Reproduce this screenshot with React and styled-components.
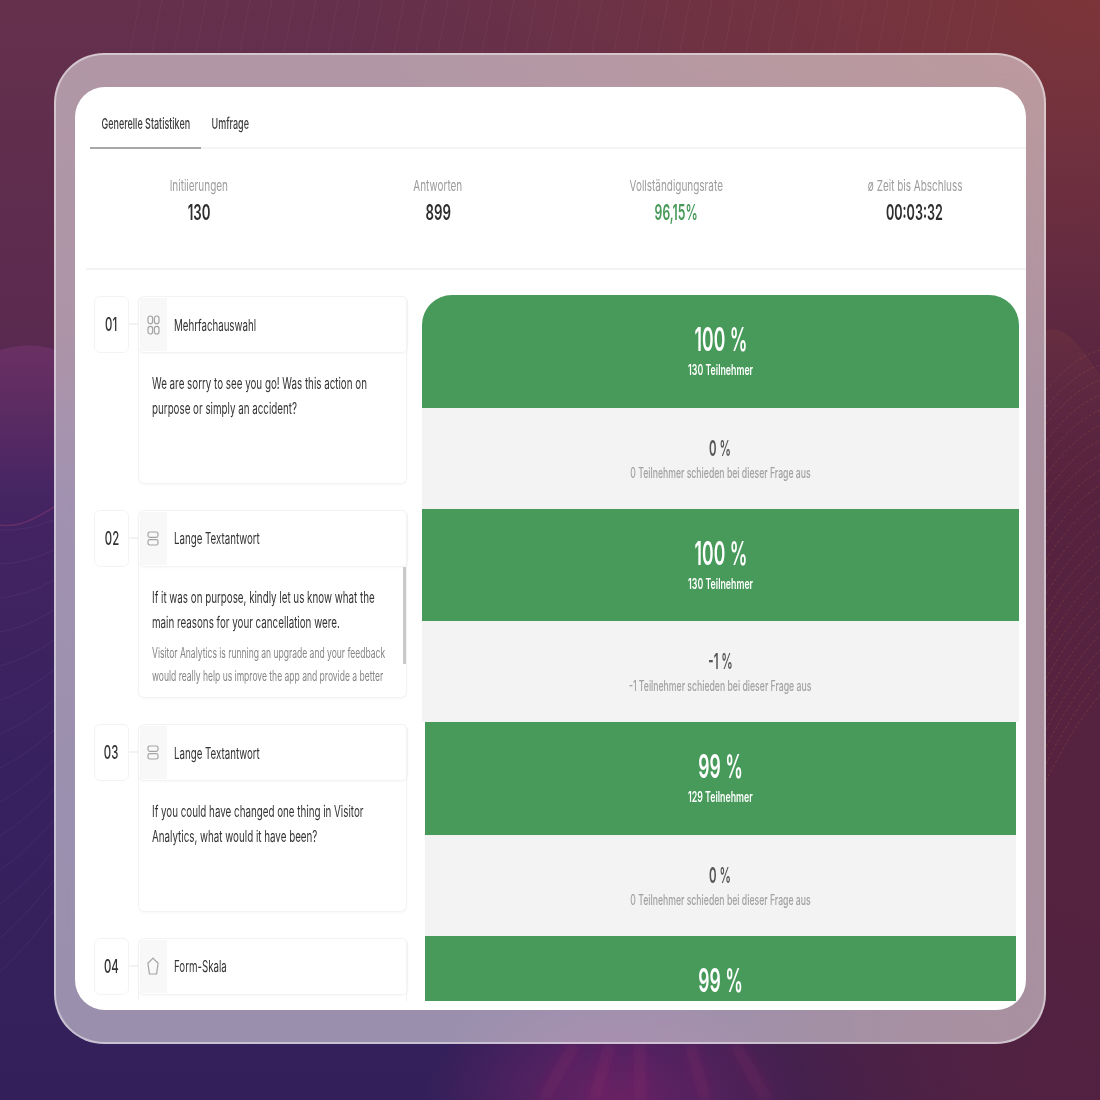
import React from 'react'
import styled, { createGlobalStyle } from 'styled-components'

const GlobalStyle = createGlobalStyle`
  html, body {
    margin: 0;
    padding: 0;
    background: #3a2058;
    font-family: Inter, "Noto Sans", "Liberation Sans", sans-serif;
  }
`;

const Page = styled.div`
  position: relative;
  box-sizing: border-box;
  width: 1100px;
  height: 1100px;
  padding: 53px 54px 56px;
  overflow: hidden;
  background:
    radial-gradient(ellipse 190px 130px at 56% 100%, rgba(135, 35, 105, .65), transparent 100%),
    radial-gradient(ellipse 760px 420px at 100% 0%, #7c3539 0%, transparent 100%),
    radial-gradient(ellipse 520px 760px at 100% 62%, #55223f 30%, transparent 100%),
    radial-gradient(ellipse 420px 260px at 100% 100%, #4c2046 20%, transparent 100%),
    linear-gradient(180deg, #64304c 0%, #5b2a4f 30%, #452462 44%, #38215f 70%, #33205a 100%);
`;

const Terrain = styled.svg`
  position: absolute;
  top: 0;
  left: 0;
  width: 1100px;
  height: 1100px;
`;

const Frame = styled.div`
  position: relative;
  box-sizing: border-box;
  width: 992px;
  height: 991px;
  padding: 32px 18px 32px 19px;
  background: rgba(255, 255, 255, .5);
  border: 2px solid rgba(255, 255, 255, .45);
  border-radius: 50px;
  backdrop-filter: blur(14px);
`;

const Sheet = styled.div`
  display: flex;
  flex-direction: column;
  height: 100%;
  background: #fff;
  border-radius: 30px;
  overflow: hidden;
  filter: blur(.35px);
`;

const TabBar = styled.div`
  display: flex;
  flex: none;
  box-sizing: border-box;
  height: 62px;
  margin-left: 15px;
  border-bottom: 2px solid #f4f4f4;
`;

const Tab = styled.div`
  display: flex;
  align-items: center;
  justify-content: center;
  box-sizing: border-box;
  width: ${props => props.$width}px;
  height: 62px;
  padding-top: 12px;
  color: #3c3c3c;
  font-size: 15px;
  font-weight: 500;
  border-bottom: 2px solid ${props => props.$active ? '#a8a8a8' : 'transparent'};
`;

const Squeeze = styled.span`
  display: inline-block;
  white-space: nowrap;
  transform: scaleX(${props => props.$sx || 0.63});
  transform-origin: ${props => props.$left ? 'left center' : 'center center'};
`;

const Stats = styled.div`
  box-sizing: border-box;
  flex: none;
  height: 121px;
  margin-left: 11px;
  border-bottom: 2px solid #f3f3f3;
`;

const StatsGrid = styled.div`
  display: grid;
  grid-template-columns: repeat(4, 238.5px);
  margin-left: -6px;
  padding-top: 27px;
`;

const Stat = styled.div`
  display: flex;
  flex-direction: column;
  align-items: center;
  gap: 5px;
`;

const StatLabel = styled.div`
  color: #9c9c9c;
  font-size: 15px;
  line-height: 20px;
`;

const StatValue = styled.div`
  color: ${props => props.$green ? '#479a5a' : '#2e2e2e'};
  font-size: 21px;
  font-weight: 600;
  line-height: 24px;
`;

const List = styled.div`
  flex: none;
  height: 706px;
  margin-top: 25px;
  overflow: hidden;
`;

const Row = styled.div`
  display: grid;
  grid-template-columns: 313px 597px;
  column-gap: 15px;
  height: 213.67px;
  padding-left: 19px;
`;

const Question = styled.div`
  display: flex;
  align-items: flex-start;
  padding-top: ${props => props.$top}px;
`;

const NumBox = styled.div`
  display: flex;
  flex: none;
  align-items: center;
  justify-content: center;
  box-sizing: border-box;
  width: 35px;
  height: 57px;
  color: #333;
  font-size: 19px;
  font-weight: 500;
  border: 1.5px solid #f3f3f3;
  border-radius: 6px;
`;

const Connector = styled.div`
  flex: none;
  width: 9px;
  height: 2px;
  margin-top: 27px;
  background: #f2f2f2;
`;

const Card = styled.div`
  display: flex;
  flex: none;
  flex-direction: column;
  box-sizing: border-box;
  width: 269px;
  height: 188px;
  border: 1.5px solid #f3f3f3;
  border-top: none;
  border-radius: 6px;
  box-shadow: 0 1px 2px rgba(0, 0, 0, .03);
`;

const CardHead = styled.div`
  display: flex;
  flex: none;
  align-items: center;
  box-sizing: border-box;
  height: 57px;
  margin: 0 -1.5px;
  padding: 1px;
  border: 1.5px solid #f3f3f3;
  border-radius: 6px;
  box-shadow: 0 1px 2px rgba(0, 0, 0, .03);
`;

const IconCell = styled.div`
  display: flex;
  flex: none;
  align-items: center;
  justify-content: center;
  width: 27px;
  height: 100%;
  color: #a4a4a4;
  background: #f8f8f8;
`;

const CardType = styled.div`
  margin-left: 7px;
  color: #333;
  font-size: 16px;
  line-height: 20px;
`;

const CardBody = styled.div`
  position: relative;
  flex: 1;
  padding: 18px 0 0 13px;
  overflow: hidden;
`;

const Line = styled.div`
  height: ${props => props.$small ? 23 : 25}px;
  color: ${props => props.$small ? '#858585' : '#333'};
  font-size: ${props => props.$small ? 14 : 16}px;
  line-height: ${props => props.$small ? 23 : 25}px;
  margin-top: ${props => props.$gap || 0}px;
`;

const ScrollThumb = styled.div`
  position: absolute;
  top: 0;
  right: 0;
  width: 3px;
  height: 97px;
  background: #c9c9c9;
`;

const Result = styled.div`
  margin: 0 ${props => props.$inset || 0}px;
`;

const Passed = styled.div`
  display: flex;
  flex-direction: column;
  align-items: center;
  box-sizing: border-box;
  height: 112.67px;
  padding-top: 27px;
  color: #fff;
  background: #479a5a;
  border-radius: ${props => props.$round ? '30px 30px 0 0' : '0'};
`;

const Percent = styled.div`
  font-size: 32px;
  font-weight: 600;
  line-height: 36px;
`;

const PassedCount = styled.div`
  margin-top: 4px;
  font-size: 14px;
  font-weight: 600;
  line-height: 16px;
`;

const Dropped = styled.div`
  display: flex;
  flex-direction: column;
  align-items: center;
  box-sizing: border-box;
  height: 101px;
  padding-top: 27px;
  background: #f3f3f3;
`;

const DroppedPercent = styled.div`
  color: #555;
  font-size: 22px;
  font-weight: 600;
  line-height: 26px;
`;

const DroppedCount = styled.div`
  margin-top: 4px;
  color: #a2a2a2;
  font-size: 14px;
  font-weight: 500;
  line-height: 16px;
`;

function ChoiceIcon() {
  return (
    <svg width="13" height="20" viewBox="0 0 13 20" fill="none" stroke="currentColor" strokeWidth="1.2">
      <rect x="1" y="1" width="4.6" height="7.6" rx="2.2" />
      <rect x="7.4" y="1" width="4.6" height="7.6" rx="2.2" />
      <rect x="1" y="11.4" width="4.6" height="7.6" rx="2.2" />
      <rect x="7.4" y="11.4" width="4.6" height="7.6" rx="2.2" />
    </svg>
  )
}

function LongTextIcon() {
  return (
    <svg width="12" height="15" viewBox="0 0 12 15" fill="none" stroke="currentColor" strokeWidth="1.2">
      <rect x="1" y="1" width="10" height="5.4" rx="1.8" />
      <rect x="1" y="8.6" width="10" height="5.4" rx="1.8" />
    </svg>
  )
}

function ScaleIcon() {
  return (
    <svg width="12" height="18" viewBox="0 0 12 18" fill="none" stroke="currentColor" strokeWidth="1.2" strokeLinejoin="round">
      <path d="M6 1 C7 2.5 9.5 4.6 11 6 C11.2 7 10 13 9.6 17 H2.4 C2 13 .8 7 1 6 C2.5 4.6 5 2.5 6 1 Z" />
    </svg>
  )
}

// thin wire lines of the mountain picture behind the frame
function wire(x0, y0, x1, y1, bend) {
  return `M${x0} ${y0} Q${(x0 + x1) / 2} ${(y0 + y1) / 2 + bend} ${x1} ${y1}`
}

const wiresLeft = Array.from({ length: 14 }, (_, i) => wire(0, 530 + i * 34, 54, 520 + i * 30, 6))
const wiresTop = Array.from({ length: 40 }, (_, i) => wire(140 + i * 22, 0, 130 + i * 22, 52, 0))
const wiresRight = Array.from({ length: 24 }, (_, i) => wire(1046, 390 + i * 17, 1100, 350 + i * 15, -12))
const streaks = [575, 610, 640, 690, 735]

const questions = [
  {
    num: '01', type: 'Mehrfachauswahl', icon: <ChoiceIcon />,
    lines: ['We are sorry to see you go! Was this action on', 'purpose or simply an accident?'],
    pct: '100 %', count: '130 Teilnehmer', dropPct: '0 %', dropCount: '0 Teilnehmer schieden bei dieser Frage aus',
  },
  {
    num: '02', type: 'Lange Textantwort', icon: <LongTextIcon />,
    lines: ['If it was on purpose, kindly let us know what the', 'main reasons for your cancellation were.'],
    note: ['Visitor Analytics is running an upgrade and your feedback', 'would really help us improve the app and provide a better'],
    pct: '100 %', count: '130 Teilnehmer', dropPct: '-1 %', dropCount: '-1 Teilnehmer schieden bei dieser Frage aus',
  },
  {
    num: '03', type: 'Lange Textantwort', icon: <LongTextIcon />, inset: 3,
    lines: ['If you could have changed one thing in Visitor', 'Analytics, what would it have been?'],
    pct: '99 %', count: '129 Teilnehmer', dropPct: '0 %', dropCount: '0 Teilnehmer schieden bei dieser Frage aus',
  },
  {
    num: '04', type: 'Form-Skala', icon: <ScaleIcon />, inset: 3,
    lines: [],
    pct: '99 %',
  },
]

const stats = [
  { label: 'Initiierungen', value: '130', sx: 0.63 },
  { label: 'Antworten', value: '899', sx: 0.63 },
  { label: 'Vollständigungsrate', value: '96,15%', green: true, sx: 0.58 },
  { label: 'ø Zeit bis Abschluss', value: '00:03:32', sx: 0.6 },
]

export default function App() {
  return (
    <Page>
      <GlobalStyle />
      <Terrain viewBox="0 0 1100 1100" fill="none">
        <defs>
          <linearGradient id="hump" x1="0" y1="0" x2="0" y2="1">
            <stop offset="0" stopColor="rgba(150, 65, 145, .28)" />
            <stop offset="1" stopColor="rgba(150, 65, 145, 0)" />
          </linearGradient>
          <linearGradient id="ridge" x1="0" y1="0" x2="0" y2="1">
            <stop offset="0" stopColor="rgba(150, 75, 60, .16)" />
            <stop offset="1" stopColor="rgba(150, 75, 60, 0)" />
          </linearGradient>
          <filter id="soft"><feGaussianBlur stdDeviation="5" /></filter>
        </defs>
        <path d="M0 350 C 20 344 40 344 56 350 L56 510 L0 510 Z" fill="url(#hump)" />
        <path d="M0 525 C 20 528 36 518 56 506" stroke="rgba(170, 70, 120, .35)" strokeWidth="1.5" />
        <path d="M1046 330 C 1065 325 1080 345 1100 375 L1100 520 L1046 520 Z" fill="url(#ridge)" />
        {wiresLeft.map((d, i) => <path key={i} d={d} stroke="rgba(170, 130, 210, .1)" />)}
        {wiresTop.map((d, i) => <path key={i} d={d} stroke="rgba(255, 220, 220, .05)" />)}
        {wiresRight.map((d, i) => <path key={i} d={d} stroke="rgba(190, 110, 60, .26)" strokeDasharray="3 2" />)}
        <g filter="url(#soft)">
          {streaks.map((x, i) => (
            <path key={x} d={wire(x, 1044, x + (i - 2) * 16, 1100, 0)} stroke="rgba(170, 45, 110, .18)" strokeWidth="12" />
          ))}
        </g>
      </Terrain>
      <Frame>
        <Sheet>
          <TabBar>
            <Tab $width={111} $active><Squeeze $sx={0.6}>Generelle Statistiken</Squeeze></Tab>
            <Tab $width={58}><Squeeze $sx={0.6}>Umfrage</Squeeze></Tab>
          </TabBar>
          <Stats>
            <StatsGrid>
              {stats.map((stat) => (
                <Stat key={stat.label}>
                  <StatLabel><Squeeze $sx={0.665}>{stat.label}</Squeeze></StatLabel>
                  <StatValue $green={stat.green}><Squeeze $sx={stat.sx}>{stat.value}</Squeeze></StatValue>
                </Stat>
              ))}
            </StatsGrid>
          </Stats>
          <List>
            {questions.map((q, index) => (
              <Row key={q.num}>
                <Question $top={index < 2 ? 1 : 2}>
                  <NumBox><Squeeze $sx={0.6}>{q.num}</Squeeze></NumBox>
                  <Connector />
                  <Card>
                    <CardHead>
                      <IconCell>{q.icon}</IconCell>
                      <CardType><Squeeze $left $sx={0.607}>{q.type}</Squeeze></CardType>
                    </CardHead>
                    <CardBody>
                      {q.note && <ScrollThumb />}
                      {q.lines.map((line) => <Line key={line}><Squeeze $left $sx={0.612}>{line}</Squeeze></Line>)}
                      {q.note && q.note.map((line, i) => (
                        <Line key={line} $small $gap={i === 0 ? 6 : 0}><Squeeze $left $sx={0.609}>{line}</Squeeze></Line>
                      ))}
                    </CardBody>
                  </Card>
                </Question>
                <Result $inset={q.inset}>
                  <Passed $round={index === 0}>
                    <Percent><Squeeze $sx={0.55}>{q.pct}</Squeeze></Percent>
                    {q.count && <PassedCount><Squeeze>{q.count}</Squeeze></PassedCount>}
                  </Passed>
                  {q.dropPct && (
                    <Dropped>
                      <DroppedPercent><Squeeze $sx={0.52}>{q.dropPct}</Squeeze></DroppedPercent>
                      <DroppedCount><Squeeze $sx={0.62}>{q.dropCount}</Squeeze></DroppedCount>
                    </Dropped>
                  )}
                </Result>
              </Row>
            ))}
          </List>
        </Sheet>
      </Frame>
    </Page>
  )
}
